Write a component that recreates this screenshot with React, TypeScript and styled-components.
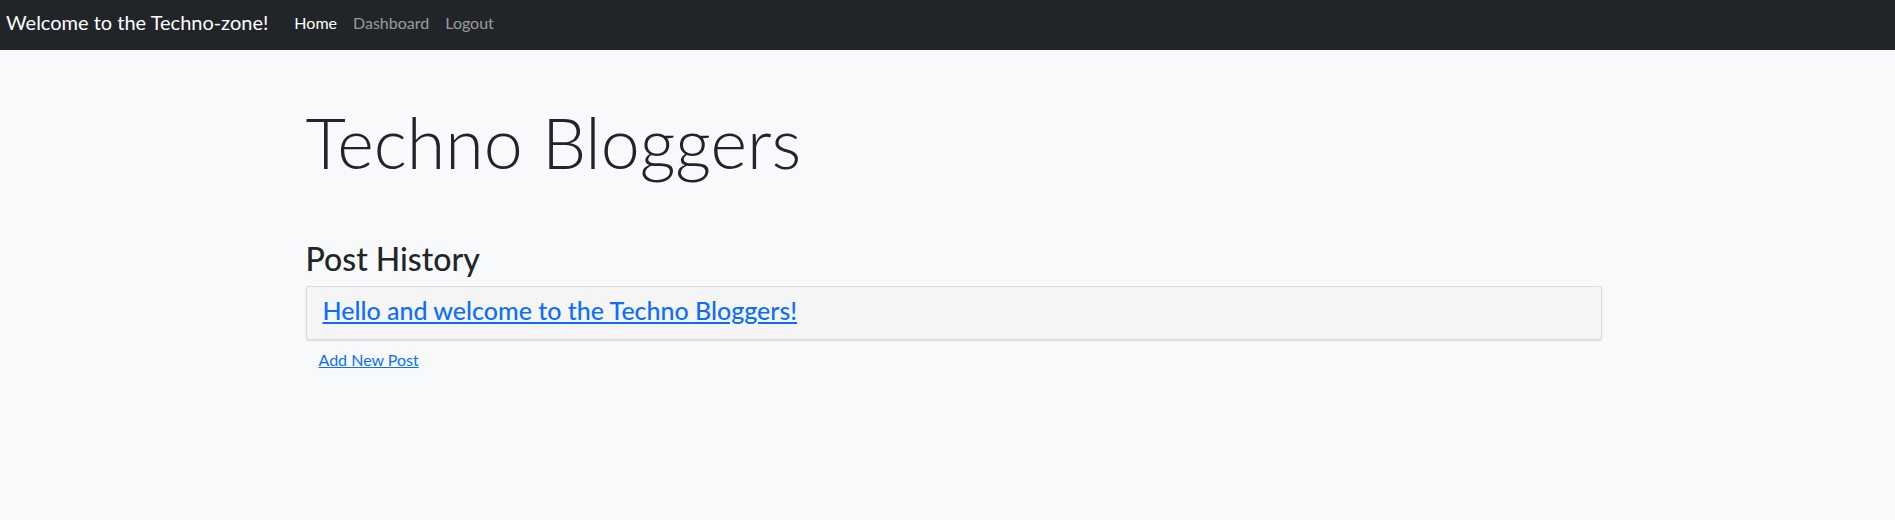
import { FC } from 'react';
import styled, { createGlobalStyle } from 'styled-components';

const GlobalStyle = createGlobalStyle`
  html, body {
    margin: 0;
    padding: 0;
    background-color: #f8f9fa;
    color: #212529;
    font-family: Lato, 'Open Sans', sans-serif;
  }
`;

const NavBar = styled.nav`
  display: flex;
  align-items: center;
  height: 50px;
  padding: 0 6px 6px;
  background-color: #212529;
  box-sizing: border-box;
`;

const Brand = styled.a`
  font-size: 20px;
  color: #fff;
  text-decoration: none;
  margin-right: 18px;
  white-space: nowrap;
`;

const NavList = styled.div`
  display: flex;
  align-items: center;
`;

const NavLink = styled.a<{ $active?: boolean }>`
  padding: 8px;
  font-size: 16px;
  text-decoration: none;
  color: ${(p) => (p.$active ? '#fff' : 'rgba(255, 255, 255, 0.55)')};
`;

const Container = styled.main`
  max-width: 1308px;
  margin: 0 auto;
  padding-left: 12px;
  box-sizing: border-box;
`;

const Title = styled.h1`
  font-size: 70px;
  font-weight: 300;
  line-height: 1.2;
  margin: 50px 0 0 0;
`;

const SectionTitle = styled.h2`
  font-size: 32px;
  font-weight: 500;
  line-height: 1.2;
  margin: 56px 0 8px 0;
`;

const PostCard = styled.div`
  background-color: #f5f5f5;
  border: 1px solid #dcdcdc;
  border-radius: 3px;
  box-shadow: 0 1px 2px rgba(0, 0, 0, 0.12);
  padding: 8px 16px 8px;
`;

const PostTitle = styled.h4`
  font-size: 25px;
  font-weight: 500;
  line-height: 1.2;
  margin: 0 0 6px 0;
  & > a {
    color: #0d6efd;
  }
`;

const LinkButton = styled.a`
  display: inline-block;
  margin-top: 1px;
  padding: 6px 12px;
  border: 1px solid transparent;
  font-size: 16px;
  line-height: 1.5;
  color: #0d6efd;
  text-decoration: underline;
`;

interface Post {
  id: number;
  title: string;
}

const posts: Post[] = [{ id: 1, title: 'Hello and welcome to the Techno Bloggers!' }];

const App: FC = () => {
  return (
    <>
      <GlobalStyle />
      <NavBar>
        <Brand href="#">Welcome to the Techno-zone!</Brand>
        <NavList>
          <NavLink href="#" $active>
            Home
          </NavLink>
          <NavLink href="#">Dashboard</NavLink>
          <NavLink href="#">Logout</NavLink>
        </NavList>
      </NavBar>
      <Container>
        <Title>Techno Bloggers</Title>
        <SectionTitle>Post History</SectionTitle>
        {posts.map((post) => (
          <PostCard key={post.id}>
            <PostTitle>
              <a href="#">{post.title}</a>
            </PostTitle>
          </PostCard>
        ))}
        <LinkButton href="#">Add New Post</LinkButton>
      </Container>
    </>
  );
};

export default App;
